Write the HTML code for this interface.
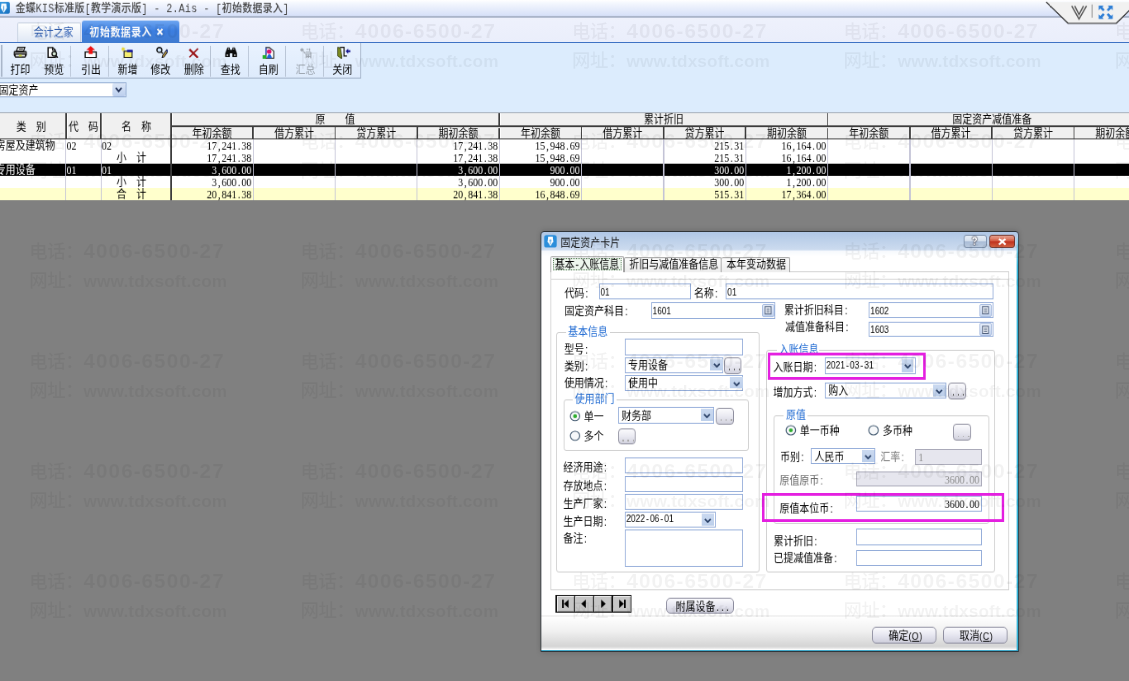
<!DOCTYPE html>
<html lang="zh-CN">
<head>
<meta charset="utf-8">
<title>金蝶KIS标准版[教学演示版]</title>
<style>
html,body{margin:0;padding:0;}
body{width:1129px;height:681px;overflow:hidden;background:#808080;}
#root{position:absolute;left:0;top:0;width:1366px;height:728px;overflow:hidden;background:#808080;transform-origin:0 0;transform:scale(0.826501,0.935440);font-family:"Liberation Sans","Noto Sans CJK SC",sans-serif;font-size:12px;color:#000;will-change:transform;}
#root div,#root svg{position:absolute;}
.t{white-space:nowrap;line-height:14px;font-size:12px;}
.n{font-family:"Liberation Serif","Noto Sans CJK SC",serif;font-size:12px;}
#root i{font-style:normal;display:inline-block;width:6px;text-align:center;}
.d{font-family:"Liberation Sans","Noto Sans CJK SC",sans-serif;font-size:10px;}
.d2{font-family:"Liberation Sans","Noto Sans CJK SC",sans-serif;font-size:10px;letter-spacing:0.12px;}
.wm{position:absolute;font-weight:bold;font-size:18.4px;line-height:30px;height:30px;white-space:nowrap;color:rgba(0,0,0,0.05);}
.wc{display:inline-block;width:54.4px;letter-spacing:-0.4px;font-weight:500;}
.wl{font-size:20.6px;letter-spacing:1.07px;}
.wu{font-size:17.2px;letter-spacing:0.13px;}
#wmroot{position:absolute;left:0;top:0;width:1129px;height:681px;overflow:hidden;font-family:"Liberation Sans","Noto Sans CJK SC",sans-serif;}
</style>
</head>
<body>
<div id="root">
<div style="position:absolute;left:0.0px;top:0.0px;width:1366.0px;height:120.8px;background:#dcecfd;"></div>
<div style="position:absolute;left:0.0px;top:0.0px;width:1366.0px;height:17.42px;background:linear-gradient(#ffffff 0%,#f4f7fe 20%,#d6e0f8 100%);"></div>
<div style="position:absolute;left:0.0px;top:16.89px;width:1366.0px;height:1.71px;background:#aab5ca;"></div>
<div style="position:absolute;left:0.0px;top:18.6px;width:1366.0px;height:26.3px;background:linear-gradient(#eef1fc,#eaeefb);"></div>
<div style="position:absolute;left:0.0px;top:44.58px;width:1366.0px;height:1.6px;background:#3269c0;"></div>
<div style="position:absolute;left:0.0px;top:46.18px;width:436.78px;height:37.63px;background:linear-gradient(#e9f2fe,#deebfc);border-right:1px solid #9fafc5;border-bottom:1px solid #9fafc5;box-sizing:border-box;"></div>
<div style="position:absolute;left:1.45px;top:48.11px;width:1.45px;height:34.21px;background:#a9b6c9;"></div>
<svg style="position:absolute;left:0px;top:2.03px" width="12.1" height="12.83" viewBox="0 0 10 12" preserveAspectRatio="none"><defs><linearGradient id="tig" x1="0" y1="0" x2="1" y2="1"><stop offset="0" stop-color="#3aa0e6"/><stop offset="1" stop-color="#166fbe"/></linearGradient></defs><rect x="-4" y="0" width="13.8" height="12" rx="1.6" fill="url(#tig)"/><path d="M1.4 1.6 L6.2 1.6 L6.8 6 L3.8 11 L0.8 6 Z" fill="#f4fbff"/><path d="M3.8 4 L3.8 9" stroke="#2f8fd9" stroke-width="0.8"/></svg>
<div class="t" style="left:18.63px;top:2.67px;color:#454545;font-weight:500;font-family:'Liberation Mono','Noto Sans CJK SC',monospace;letter-spacing:0.28px;">金蝶KIS标准版[教学演示版] - 2.Ais - [初始数据录入]</div>
<div style="position:absolute;left:20.93px;top:24.05px;width:77.07px;height:20.53px;background:linear-gradient(#fdfeff,#dfe8f5);border:1px solid #c3cede;border-bottom:none;box-sizing:border-box;border-radius:2px 2px 0 0;"></div>
<div class="t" style="left:40.65px;top:28.44px;color:#2c5cb0;">会计之家</div>
<div style="position:absolute;left:98.61px;top:22.45px;width:118.57px;height:23.52px;background:linear-gradient(#6ea6f0,#3c7ee0 45%,#3f7bd0);border-radius:3px 3px 0 0;"></div>
<div class="t" style="left:108.29px;top:27.79px;color:#fff;font-weight:bold;letter-spacing:0.6px;">初始数据录入</div>
<svg style="position:absolute;left:189.35px;top:30.47px" width="9.07" height="8.02" viewBox="0 0 8 8"><path d="M1 1 L7 7 M7 1 L1 7" stroke="#fff" stroke-width="2"/></svg>
<svg style="position:absolute;left:1258.32px;top:0px" width="108.89" height="27.79" viewBox="0 0 90 26" preserveAspectRatio="none"><path d="M6.5 2 L28.3 23.4 L76.6 23.4 L90 10 L90 2 Z" fill="#f1f1f1"/><path d="M6.5 2 L28.3 23.4 L76.6 23.4 L90 10" fill="none" stroke="#222" stroke-width="1.1"/><path d="M32 6 L39.3 19 L46.8 6 M35 6 L39.3 14.5 L43.8 6" fill="none" stroke="#555" stroke-width="1.3"/><path d="M52.3 4.5 L52.3 17.7" stroke="#777" stroke-width="0.8"/><g fill="#2f7fd6"><path d="M59 5.5 L64 5.5 L62.6 7 L65 9.8 L63.3 11.3 L60.6 8.6 L59 10.2 Z"/><path d="M73 5.5 L68 5.5 L69.4 7 L67 9.8 L68.7 11.3 L71.4 8.6 L73 10.2 Z"/><path d="M59 19 L64 19 L62.6 17.5 L65 14.7 L63.3 13.2 L60.6 15.9 L59 14.3 Z"/><path d="M73 19 L68 19 L69.4 17.5 L67 14.7 L68.7 13.2 L71.4 15.9 L73 14.3 Z"/></g></svg>
<div style="position:absolute;left:84.57px;top:48.64px;width:1.33px;height:33.14px;background:#b7c3d4;"></div>
<div style="position:absolute;left:130.79px;top:48.64px;width:1.33px;height:33.14px;background:#b7c3d4;"></div>
<div style="position:absolute;left:254.08px;top:48.64px;width:1.33px;height:33.14px;background:#b7c3d4;"></div>
<div style="position:absolute;left:300.06px;top:48.64px;width:1.33px;height:33.14px;background:#b7c3d4;"></div>
<div style="position:absolute;left:344.95px;top:48.64px;width:1.33px;height:33.14px;background:#b7c3d4;"></div>
<div style="position:absolute;left:390.93px;top:48.64px;width:1.33px;height:33.14px;background:#b7c3d4;"></div>
<div class="t" style="left:12.58px;top:67.88px;color:#000;">打印</div>
<div class="t" style="left:53.24px;top:67.88px;color:#000;">预览</div>
<div class="t" style="left:98.0px;top:67.88px;color:#000;">引出</div>
<div class="t" style="left:142.53px;top:67.88px;color:#000;">新增</div>
<div class="t" style="left:182.21px;top:67.88px;color:#000;">修改</div>
<div class="t" style="left:222.87px;top:67.88px;color:#000;">删除</div>
<div class="t" style="left:266.79px;top:67.88px;color:#000;">查找</div>
<div class="t" style="left:312.64px;top:67.88px;color:#000;">自刷</div>
<div class="t" style="left:357.41px;top:67.88px;color:#9aa3ad;">汇总</div>
<div class="t" style="left:402.18px;top:67.88px;color:#000;">关闭</div>
<svg style="position:absolute;left:16.33px;top:49.71px" width="16.94" height="12.51" viewBox="0 0 14 11.7" preserveAspectRatio="none"><path d="M4.6 0.6 L11.6 0.6 L10.4 4.2 L3.2 4.2 Z" fill="#fff" stroke="#111" stroke-width="1.1"/><path d="M5.6 2.3 L9.8 2.3" stroke="#111" stroke-width="0.9"/><path d="M1.6 4.2 L12.4 4.2 Q13.6 4.2 13.6 5.6 L13.6 8.4 L12 10.9 L2 10.9 L0.5 8.4 L0.5 5.6 Q0.5 4.2 1.6 4.2 Z" fill="#151515"/><path d="M1.4 6.3 L12.6 6.3" stroke="#c9c9c9" stroke-width="0.9"/><rect x="2.4" y="8" width="9.2" height="1.7" fill="#e9e9e9"/><rect x="5.6" y="8" width="3" height="1.7" fill="#c5d235"/></svg>
<svg style="position:absolute;left:56.87px;top:49.82px" width="13.79" height="12.4" viewBox="0 0 11.4 11.6" preserveAspectRatio="none"><path d="M1 0.8 L5.6 0.8 L8.2 3.4 L8.2 10.6 L1 10.6 Z" fill="#fff" stroke="#111" stroke-width="1.3"/><path d="M5.4 0.8 L5.4 3.6 L8.2 3.6" fill="none" stroke="#111" stroke-width="0.9"/><circle cx="7.2" cy="7" r="2.3" fill="#d9ecd9" stroke="#111" stroke-width="1.2"/><path d="M8.9 8.9 L10.6 11" stroke="#111" stroke-width="1.5"/></svg>
<svg style="position:absolute;left:102.36px;top:48.53px" width="15.49" height="13.47" viewBox="0 0 12.8 12.6" preserveAspectRatio="none"><path d="M0.9 6.2 L0.9 11.9 L11.9 11.9 L11.9 6.2 Z" fill="#fff" stroke="#111" stroke-width="1.2"/><path d="M6.4 0.2 L10.9 4.3 L8.3 4.3 L8.3 8.3 L4.5 8.3 L4.5 4.3 L1.9 4.3 Z" fill="#ee1111"/></svg>
<svg style="position:absolute;left:147.37px;top:49.82px" width="13.79" height="12.19" viewBox="0 0 11.4 11.4" preserveAspectRatio="none"><path d="M1.6 0.4 L1.6 5 M0 2.2 L3.6 2.2 M0.4 0.8 L3 3.8 M3 0.8 L0.4 3.8" stroke="#e4d21c" stroke-width="0.8"/><rect x="2.6" y="4.4" width="8" height="6.4" fill="#f5ee70" stroke="#222" stroke-width="1"/><rect x="5.6" y="3" width="5.6" height="2.4" fill="#10129c"/></svg>
<svg style="position:absolute;left:188.51px;top:50.03px" width="14.76" height="11.97" viewBox="0 0 12.2 11.2" preserveAspectRatio="none"><circle cx="3.2" cy="3.2" r="2.5" fill="#cfe3f7" stroke="#111" stroke-width="1.2"/><path d="M5 5 L6.6 6.8" stroke="#111" stroke-width="1.3"/><path d="M10.6 3 L11.9 4.3 L7.8 10.2 L5.9 10.9 L6.4 8.9 Z" fill="#e0b63a" stroke="#1a1a2a" stroke-width="0.9"/><path d="M10.6 3 L11.9 4.3 L11 5.6 L9.7 4.3 Z" fill="#223a9a"/></svg>
<svg style="position:absolute;left:227.95px;top:50.67px" width="13.07" height="11.33" viewBox="0 0 10.8 10.6" preserveAspectRatio="none"><path d="M1 1.6 L9.4 10" stroke="#9a1518" stroke-width="2.1" fill="none"/><path d="M9.6 0.8 L1 9.6" stroke="#9a1518" stroke-width="1.4" fill="none"/></svg>
<svg style="position:absolute;left:271.99px;top:50.03px" width="15.24" height="11.55" viewBox="0 0 12.6 10.8" preserveAspectRatio="none"><path d="M2.6 0.6 L4.8 0.6 L5.2 3 L7.4 3 L7.8 0.6 L10 0.6 L12.2 6.6 L12.2 10.2 L7.6 10.2 L7.6 6.6 L5 6.6 L5 10.2 L0.4 10.2 L0.4 6.6 Z" fill="#0c0c0c"/><rect x="1.8" y="7.8" width="1.6" height="1.3" fill="#e6e6e6"/><rect x="9.2" y="7.8" width="1.6" height="1.3" fill="#e6e6e6"/><rect x="3.2" y="1.6" width="1" height="1" fill="#ddd"/><rect x="8.4" y="1.6" width="1" height="1" fill="#ddd"/></svg>
<svg style="position:absolute;left:316.52px;top:49.82px" width="15.24" height="13.47" viewBox="0 0 12.6 12.6" preserveAspectRatio="none"><path d="M4 0.8 L7.4 0.8 L11.8 4.4 L11.8 11.4 L4 11.4 Z" fill="#fff" stroke="#222" stroke-width="1"/><path d="M4 1 L4 8" stroke="#3b57c8" stroke-width="1.2"/><circle cx="7.2" cy="4.8" r="2.3" fill="#d8146e"/><path d="M5 11.4 Q5.2 7.6 7.4 7.4 Q9.6 7.6 9.8 11.4 Z" fill="#1e63d8"/><rect x="0.6" y="8.4" width="3.6" height="3.6" fill="#22b02a"/></svg>
<svg style="position:absolute;left:363.46px;top:51.1px" width="15" height="12.19" viewBox="0 0 12.4 11.4" preserveAspectRatio="none"><circle cx="2" cy="2.2" r="1.7" fill="#a2a9b2"/><path d="M3.2 3.6 L5.2 5.4" stroke="#a2a9b2" stroke-width="1"/><path d="M6.4 1.6 L8.6 1.6 M9.6 0.6 L9.6 3.2 M5.6 4.4 L10.6 4.4 M5.2 6.6 L10.8 6.6 M5.6 8.8 L10.8 8.8 M10.8 4.4 L10.8 10.6 M6.2 6.6 L6.2 10.4 M8.4 6.6 L8.4 10.4" stroke="#a2a9b2" stroke-width="1.05"/></svg>
<svg style="position:absolute;left:407.5px;top:49.82px" width="16.7" height="13.04" viewBox="0 0 13.8 12.2" preserveAspectRatio="none"><path d="M2.8 0.6 L6.8 0.6 L6.8 9.2 L9.8 9.2" fill="#fff" stroke="#111" stroke-width="1.1"/><path d="M0.5 0.5 L3.2 1.2 L4.6 9.4 L4.4 12 L0.5 9.2 Z" fill="#7d8c22" stroke="#2a3008" stroke-width="0.7"/><path d="M8.4 4.4 L11 1.8 L11 3.4 L13.4 3.4 L13.4 5.4 L11 5.4 L11 7 Z" fill="#15158f"/></svg>
<div style="position:absolute;left:-1.21px;top:88.3px;width:154.14px;height:15.82px;background:#fff;border:1px solid #8fa9d0;box-sizing:border-box;"></div>
<div style="position:absolute;left:136.0px;top:89.37px;width:15.73px;height:13.68px;background:linear-gradient(#dbe6f7,#bccfee);border-radius:2px;"></div>
<svg style="position:absolute;left:139.38px;top:93.43px" width="9.2" height="5.99" viewBox="0 0 9 6"><path d="M1 1 L4.5 4.6 L8 1" fill="none" stroke="#1f2f55" stroke-width="1.8"/></svg>
<div class="t" style="left:-1.45px;top:89.58px;">固定资产</div>
<div style="position:absolute;left:0.0px;top:120.8px;width:1366.0px;height:93.22px;background:#fff;"></div>
<div style="position:absolute;left:0.0px;top:175.1px;width:1366.0px;height:12.94px;background:#000;"></div>
<div style="position:absolute;left:0.0px;top:201.19px;width:1366.0px;height:12.83px;background:#ffffcc;"></div>
<div style="position:absolute;left:79.25px;top:148.59px;width:1.21px;height:65.42px;background:#c3c3d6;"></div>
<div style="position:absolute;left:121.6px;top:148.59px;width:1.21px;height:65.42px;background:#c3c3d6;"></div>
<div style="position:absolute;left:206.05px;top:148.59px;width:1.69px;height:65.42px;background:#3c3c3c;"></div>
<div style="position:absolute;left:305.63px;top:148.59px;width:1.21px;height:65.42px;background:#c3c3d6;"></div>
<div style="position:absolute;left:404.96px;top:148.59px;width:1.21px;height:65.42px;background:#c3c3d6;"></div>
<div style="position:absolute;left:504.29px;top:148.59px;width:1.21px;height:65.42px;background:#c3c3d6;"></div>
<div style="position:absolute;left:603.63px;top:148.59px;width:1.21px;height:65.42px;background:#c3c3d6;"></div>
<div style="position:absolute;left:702.96px;top:148.59px;width:1.21px;height:65.42px;background:#c3c3d6;"></div>
<div style="position:absolute;left:802.3px;top:148.59px;width:1.21px;height:65.42px;background:#c3c3d6;"></div>
<div style="position:absolute;left:901.63px;top:148.59px;width:1.21px;height:65.42px;background:#c3c3d6;"></div>
<div style="position:absolute;left:1000.97px;top:148.59px;width:1.21px;height:65.42px;background:#c3c3d6;"></div>
<div style="position:absolute;left:1100.3px;top:148.59px;width:1.21px;height:65.42px;background:#c3c3d6;"></div>
<div style="position:absolute;left:1199.64px;top:148.59px;width:1.21px;height:65.42px;background:#c3c3d6;"></div>
<div style="position:absolute;left:1298.97px;top:148.59px;width:1.21px;height:65.42px;background:#c3c3d6;"></div>
<div style="position:absolute;left:0.0px;top:120.16px;width:1366.0px;height:29.18px;background:#f0f0f0;border-top:1px solid #a4acb6;border-bottom:1.3px solid #3c3c3c;box-sizing:border-box;"></div>
<div style="position:absolute;left:79.01px;top:120.8px;width:1.69px;height:28.33px;background:#3c3c3c;"></div>
<div style="position:absolute;left:80.58px;top:121.33px;width:1.09px;height:26.73px;background:#fff;"></div>
<div style="position:absolute;left:121.36px;top:120.8px;width:1.69px;height:28.33px;background:#3c3c3c;"></div>
<div style="position:absolute;left:122.93px;top:121.33px;width:1.09px;height:26.73px;background:#fff;"></div>
<div style="position:absolute;left:206.05px;top:120.8px;width:1.69px;height:28.33px;background:#3c3c3c;"></div>
<div style="position:absolute;left:207.62px;top:121.33px;width:1.09px;height:26.73px;background:#fff;"></div>
<div style="position:absolute;left:603.39px;top:120.8px;width:1.69px;height:28.33px;background:#3c3c3c;"></div>
<div style="position:absolute;left:604.96px;top:121.33px;width:1.09px;height:26.73px;background:#fff;"></div>
<div style="position:absolute;left:1000.73px;top:120.8px;width:1.69px;height:28.33px;background:#3c3c3c;"></div>
<div style="position:absolute;left:1002.3px;top:121.33px;width:1.09px;height:26.73px;background:#fff;"></div>
<div style="position:absolute;left:206.9px;top:134.16px;width:1159.1px;height:1.39px;background:#3c3c3c;"></div>
<div style="position:absolute;left:208.11px;top:135.55px;width:1157.89px;height:0.86px;background:#fff;"></div>
<div style="position:absolute;left:305.38px;top:135.23px;width:1.69px;height:13.9px;background:#3c3c3c;"></div>
<div style="position:absolute;left:307.08px;top:136.19px;width:1.09px;height:11.87px;background:#fff;"></div>
<div style="position:absolute;left:404.72px;top:135.23px;width:1.69px;height:13.9px;background:#3c3c3c;"></div>
<div style="position:absolute;left:406.41px;top:136.19px;width:1.09px;height:11.87px;background:#fff;"></div>
<div style="position:absolute;left:504.05px;top:135.23px;width:1.69px;height:13.9px;background:#3c3c3c;"></div>
<div style="position:absolute;left:505.75px;top:136.19px;width:1.09px;height:11.87px;background:#fff;"></div>
<div style="position:absolute;left:702.72px;top:135.23px;width:1.69px;height:13.9px;background:#3c3c3c;"></div>
<div style="position:absolute;left:704.42px;top:136.19px;width:1.09px;height:11.87px;background:#fff;"></div>
<div style="position:absolute;left:802.06px;top:135.23px;width:1.69px;height:13.9px;background:#3c3c3c;"></div>
<div style="position:absolute;left:803.75px;top:136.19px;width:1.09px;height:11.87px;background:#fff;"></div>
<div style="position:absolute;left:901.39px;top:135.23px;width:1.69px;height:13.9px;background:#3c3c3c;"></div>
<div style="position:absolute;left:903.08px;top:136.19px;width:1.09px;height:11.87px;background:#fff;"></div>
<div style="position:absolute;left:1100.06px;top:135.23px;width:1.69px;height:13.9px;background:#3c3c3c;"></div>
<div style="position:absolute;left:1101.75px;top:136.19px;width:1.09px;height:11.87px;background:#fff;"></div>
<div style="position:absolute;left:1199.39px;top:135.23px;width:1.69px;height:13.9px;background:#3c3c3c;"></div>
<div style="position:absolute;left:1201.09px;top:136.19px;width:1.09px;height:11.87px;background:#fff;"></div>
<div style="position:absolute;left:1298.73px;top:135.23px;width:1.69px;height:13.9px;background:#3c3c3c;"></div>
<div style="position:absolute;left:1300.42px;top:136.19px;width:1.09px;height:11.87px;background:#fff;"></div>
<div class="t" style="left:-62.25px;width:200px;text-align:center;top:128.71px;">类&#12288;别</div>
<div class="t" style="left:0.9099999999999966px;width:200px;text-align:center;top:128.71px;">代&#12288;码</div>
<div class="t" style="left:65.03px;width:200px;text-align:center;top:128.71px;">名&#12288;称</div>
<div class="t" style="left:305.57px;width:200px;text-align:center;top:121.33px;">原&#12288;&#12288;值</div>
<div class="t" style="left:702.9px;width:200px;text-align:center;top:121.33px;">累计折旧</div>
<div class="t" style="left:1100.24px;width:200px;text-align:center;top:121.33px;">固定资产减值准备</div>
<div class="t" style="left:156.56px;width:200px;text-align:center;top:135.77px;">年初余额</div>
<div class="t" style="left:255.89999999999998px;width:200px;text-align:center;top:135.77px;">借方累计</div>
<div class="t" style="left:355.23px;width:200px;text-align:center;top:135.77px;">贷方累计</div>
<div class="t" style="left:454.57000000000005px;width:200px;text-align:center;top:135.77px;">期初余额</div>
<div class="t" style="left:553.9px;width:200px;text-align:center;top:135.77px;">年初余额</div>
<div class="t" style="left:653.24px;width:200px;text-align:center;top:135.77px;">借方累计</div>
<div class="t" style="left:752.57px;width:200px;text-align:center;top:135.77px;">贷方累计</div>
<div class="t" style="left:851.9px;width:200px;text-align:center;top:135.77px;">期初余额</div>
<div class="t" style="left:951.24px;width:200px;text-align:center;top:135.77px;">年初余额</div>
<div class="t" style="left:1050.57px;width:200px;text-align:center;top:135.77px;">借方累计</div>
<div class="t" style="left:1149.91px;width:200px;text-align:center;top:135.77px;">贷方累计</div>
<div class="t" style="left:1249.24px;width:200px;text-align:center;top:135.77px;">期初余额</div>
<div class="t" style="left:-5.2px;top:148.7px;color:#000;">房屋及建筑物</div>
<div class="t n" style="left:80.58px;top:148.7px;color:#000;">02</div>
<div class="t n" style="left:122.93px;top:148.7px;color:#000;">02</div>
<div class="t n" style="left:184.17000000000002px;width:120px;text-align:right;top:148.7px;color:#000;">17<i>,</i>241<i>.</i>38</div>
<div class="t n" style="left:482.17999999999995px;width:120px;text-align:right;top:148.7px;color:#000;">17<i>,</i>241<i>.</i>38</div>
<div class="t n" style="left:581.51px;width:120px;text-align:right;top:148.7px;color:#000;">15<i>,</i>948<i>.</i>69</div>
<div class="t n" style="left:780.18px;width:120px;text-align:right;top:148.7px;color:#000;">215<i>.</i>31</div>
<div class="t n" style="left:879.52px;width:120px;text-align:right;top:148.7px;color:#000;">16<i>,</i>164<i>.</i>00</div>
<div class="t" style="left:141.08px;top:161.85px;color:#000;">小&#12288;计</div>
<div class="t n" style="left:184.17000000000002px;width:120px;text-align:right;top:161.85px;color:#000;">17<i>,</i>241<i>.</i>38</div>
<div class="t n" style="left:482.17999999999995px;width:120px;text-align:right;top:161.85px;color:#000;">17<i>,</i>241<i>.</i>38</div>
<div class="t n" style="left:581.51px;width:120px;text-align:right;top:161.85px;color:#000;">15<i>,</i>948<i>.</i>69</div>
<div class="t n" style="left:780.18px;width:120px;text-align:right;top:161.85px;color:#000;">215<i>.</i>31</div>
<div class="t n" style="left:879.52px;width:120px;text-align:right;top:161.85px;color:#000;">16<i>,</i>164<i>.</i>00</div>
<div class="t" style="left:-5.2px;top:175.0px;color:#fff;">专用设备</div>
<div class="t n" style="left:80.58px;top:175.0px;color:#fff;">01</div>
<div class="t n" style="left:122.93px;top:175.0px;color:#fff;">01</div>
<div class="t n" style="left:184.17000000000002px;width:120px;text-align:right;top:175.0px;color:#fff;">3<i>,</i>600<i>.</i>00</div>
<div class="t n" style="left:482.17999999999995px;width:120px;text-align:right;top:175.0px;color:#fff;">3<i>,</i>600<i>.</i>00</div>
<div class="t n" style="left:581.51px;width:120px;text-align:right;top:175.0px;color:#fff;">900<i>.</i>00</div>
<div class="t n" style="left:780.18px;width:120px;text-align:right;top:175.0px;color:#fff;">300<i>.</i>00</div>
<div class="t n" style="left:879.52px;width:120px;text-align:right;top:175.0px;color:#fff;">1<i>,</i>200<i>.</i>00</div>
<div class="t" style="left:141.08px;top:188.15px;color:#000;">小&#12288;计</div>
<div class="t n" style="left:184.17000000000002px;width:120px;text-align:right;top:188.15px;color:#000;">3<i>,</i>600<i>.</i>00</div>
<div class="t n" style="left:482.17999999999995px;width:120px;text-align:right;top:188.15px;color:#000;">3<i>,</i>600<i>.</i>00</div>
<div class="t n" style="left:581.51px;width:120px;text-align:right;top:188.15px;color:#000;">900<i>.</i>00</div>
<div class="t n" style="left:780.18px;width:120px;text-align:right;top:188.15px;color:#000;">300<i>.</i>00</div>
<div class="t n" style="left:879.52px;width:120px;text-align:right;top:188.15px;color:#000;">1<i>,</i>200<i>.</i>00</div>
<div class="t" style="left:141.08px;top:201.19px;color:#000;">合&#12288;计</div>
<div class="t n" style="left:184.17000000000002px;width:120px;text-align:right;top:201.19px;color:#000;">20<i>,</i>841<i>.</i>38</div>
<div class="t n" style="left:482.17999999999995px;width:120px;text-align:right;top:201.19px;color:#000;">20<i>,</i>841<i>.</i>38</div>
<div class="t n" style="left:581.51px;width:120px;text-align:right;top:201.19px;color:#000;">16<i>,</i>848<i>.</i>69</div>
<div class="t n" style="left:780.18px;width:120px;text-align:right;top:201.19px;color:#000;">515<i>.</i>31</div>
<div class="t n" style="left:879.52px;width:120px;text-align:right;top:201.19px;color:#000;">17<i>,</i>364<i>.</i>00</div>
<div style="position:absolute;left:653.96px;top:247.37px;width:579.43px;height:449.41px;background:linear-gradient(#b0c7e6 0px,#bfd2ea 10px,#ccdbef 19px,#f6f9fd 20.5px,#ffffff 26px,#ffffff 100%);border:1px solid #2e3338;box-sizing:border-box;border-radius:4px 4px 0 0;box-shadow:0 0 6px rgba(0,0,0,0.2);"></div>
<div style="position:absolute;left:1230.37px;top:254.43px;width:1.45px;height:441.08px;background:linear-gradient(#9fd4ea,#33b4d8 30px,#33b4d8);"></div>
<div style="position:absolute;left:655.17px;top:694.65px;width:576.77px;height:1.07px;background:#2a9fc4;"></div>
<div style="position:absolute;left:655.29px;top:659.16px;width:574.71px;height:34.64px;background:linear-gradient(#ffffff,#f0f0f0 45%,#d4d4d4 92%,#f4f4f4);"></div>
<div style="position:absolute;left:655.29px;top:658.09px;width:574.71px;height:1.07px;background:#e4e4e4;"></div>
<svg style="position:absolute;left:658.2px;top:251.22px" width="15.97" height="13.9" viewBox="0 0 14 14" preserveAspectRatio="none"><rect x="0.3" y="0.3" width="13.4" height="13.4" rx="2.6" fill="#2b8edb"/><path d="M4.6 2 L9.4 2 L10 7.2 L7 12.4 L4 7.2 Z" fill="#fff"/><path d="M7 5 L7 10.4 M5.8 6.2 L8.2 6.2" stroke="#2b8edb" stroke-width="0.8"/></svg>
<div class="t" style="left:678.28px;top:252.61px;color:#111;">固定资产卡片</div>
<div style="position:absolute;left:1165.64px;top:251.22px;width:28.8px;height:14.11px;background:linear-gradient(#e6edf6,#d3deec 48%,#a9bcd6 52%,#b9c9de);border:1px solid #7b8ea9;border-radius:3px;box-sizing:border-box;"></div>
<div class="t" style="left:1175.56px;top:250.79px;color:#fff;font-weight:bold;font-size:12px;text-shadow:0 0 1px #223,0 0 1px #223,0 0 2px #223;">?</div>
<div style="position:absolute;left:1197.34px;top:251.22px;width:30.25px;height:14.11px;background:linear-gradient(#e6a392,#d4583f 48%,#bf311d 52%,#d2603f);border:1px solid #70352c;border-radius:3px;box-sizing:border-box;"></div>
<svg style="position:absolute;left:1206.77px;top:254px" width="11.37" height="8.55" viewBox="0 0 10 8" preserveAspectRatio="none"><path d="M1.5 1 L8.5 7 M8.5 1 L1.5 7" stroke="#fff" stroke-width="2.1"/></svg>
<div style="position:absolute;left:665.82px;top:290.34px;width:555.23px;height:340.8px;background:#fff;border:1px solid #d0d0d0;box-sizing:border-box;"></div>
<div style="position:absolute;left:665.82px;top:298.04px;width:555.23px;height:1.07px;background:#d6d6d6;"></div>
<div style="position:absolute;left:754.51px;top:275.38px;width:118.33px;height:15.39px;background:linear-gradient(#fbfbfb,#ececec);border:1px solid #9a9a9a;border-bottom:none;box-sizing:border-box;border-radius:2px 2px 0 0;"></div>
<div style="position:absolute;left:872.84px;top:275.38px;width:82.76px;height:15.39px;background:linear-gradient(#fbfbfb,#ececec);border:1px solid #9a9a9a;border-left:none;border-bottom:none;box-sizing:border-box;border-radius:2px 2px 0 0;"></div>
<div style="position:absolute;left:665.82px;top:273.88px;width:89.41px;height:17.53px;background:#fff;border:1px solid #9a9a9a;border-bottom:none;box-sizing:border-box;border-radius:2px 2px 0 0;"></div>
<div style="position:absolute;left:669.09px;top:276.02px;width:83.0px;height:13.04px;border:1px dotted #3d6b3d;box-sizing:border-box;background:#eef6ee;"></div>
<div class="t" style="left:671.26px;top:275.81px;">基本<i>-</i>入账信息</div>
<div class="t" style="left:761.28px;top:276.02px;">折旧与减值准备信息</div>
<div class="t" style="left:878.89px;top:276.02px;">本年变动数据</div>
<div class="t" style="left:682.88px;top:307.02px;">代码<i>:</i></div>
<div style="position:absolute;left:724.74px;top:303.17px;width:110.83px;height:17.1px;background:#fff;border:1px solid #93acd9;box-sizing:border-box;"></div>
<div class="t d" style="left:726.44px;top:306.38px;">01</div>
<div class="t" style="left:839.68px;top:307.02px;">名称<i>:</i></div>
<div style="position:absolute;left:878.4px;top:303.17px;width:323.53px;height:17.1px;background:#fff;border:1px solid #93acd9;box-sizing:border-box;"></div>
<div class="t d" style="left:880.1px;top:305.52px;">01</div>
<div class="t" style="left:682.88px;top:325.84px;">固定资产科目<i>:</i></div>
<div style="position:absolute;left:787.9px;top:323.48px;width:150.51px;height:17.1px;background:#fff;border:1px solid #93acd9;box-sizing:border-box;"></div>
<div class="t d" style="left:789.59px;top:326.05px;">1601</div>
<div style="position:absolute;left:921.72px;top:324.98px;width:15.0px;height:14.11px;background:linear-gradient(#e6edf9,#c3d3ee);border:1px solid #a9bde0;border-radius:2px;box-sizing:border-box;"></div>
<svg style="position:absolute;left:924.86px;top:327.33px" width="8.71" height="9.41" viewBox="0 0 8 9" preserveAspectRatio="none"><rect x="0.7" y="0.7" width="6.6" height="7.6" fill="#f4f7fc" stroke="#50607c" stroke-width="1"/><path d="M2.3 3 L5.7 3 M2.3 4.7 L5.7 4.7 M2.3 6.4 L5.7 6.4" stroke="#50607c" stroke-width="0.8"/></svg>
<div class="t" style="left:948.82px;top:324.55px;">累计折旧科目<i>:</i></div>
<div style="position:absolute;left:1051.42px;top:323.48px;width:150.51px;height:16.89px;background:#fff;border:1px solid #93acd9;box-sizing:border-box;"></div>
<div class="t d" style="left:1053.11px;top:326.05px;">1602</div>
<div style="position:absolute;left:1185.0px;top:324.98px;width:15.0px;height:13.9px;background:linear-gradient(#e6edf9,#c3d3ee);border:1px solid #a9bde0;border-radius:2px;box-sizing:border-box;"></div>
<svg style="position:absolute;left:1188.14px;top:327.33px" width="8.71" height="9.19" viewBox="0 0 8 9" preserveAspectRatio="none"><rect x="0.7" y="0.7" width="6.6" height="7.6" fill="#f4f7fc" stroke="#50607c" stroke-width="1"/><path d="M2.3 3 L5.7 3 M2.3 4.7 L5.7 4.7 M2.3 6.4 L5.7 6.4" stroke="#50607c" stroke-width="0.8"/></svg>
<div class="t" style="left:950.03px;top:343.37px;">减值准备科目<i>:</i></div>
<div style="position:absolute;left:1051.42px;top:343.8px;width:150.51px;height:16.68px;background:#fff;border:1px solid #93acd9;box-sizing:border-box;"></div>
<div class="t d" style="left:1053.11px;top:346.15px;">1603</div>
<div style="position:absolute;left:1185.0px;top:345.29px;width:15.0px;height:13.9px;background:linear-gradient(#e6edf9,#c3d3ee);border:1px solid #a9bde0;border-radius:2px;box-sizing:border-box;"></div>
<svg style="position:absolute;left:1188.14px;top:347.64px" width="8.71" height="9.19" viewBox="0 0 8 9" preserveAspectRatio="none"><rect x="0.7" y="0.7" width="6.6" height="7.6" fill="#f4f7fc" stroke="#50607c" stroke-width="1"/><path d="M2.3 3 L5.7 3 M2.3 4.7 L5.7 4.7 M2.3 6.4 L5.7 6.4" stroke="#50607c" stroke-width="0.8"/></svg>
<div style="position:absolute;left:673.44px;top:354.91px;width:245.86px;height:256.78px;border:1px solid #cdcdcd;border-radius:3px;box-sizing:border-box;"></div>
<div style="position:absolute;left:684.69px;top:353.84px;width:53.24px;height:3.21px;background:#fff;"></div>
<div class="t" style="left:687.36px;top:347.86px;color:#1c68d2;">基本信息</div>
<div class="t" style="left:682.64px;top:367.31px;">型号<i>:</i></div>
<div style="position:absolute;left:755.96px;top:362.4px;width:142.77px;height:17.32px;background:#fff;border:1px solid #93acd9;box-sizing:border-box;"></div>
<div class="t" style="left:682.64px;top:384.85px;">类别<i>:</i></div>
<div style="position:absolute;left:755.96px;top:381.64px;width:119.3px;height:16.89px;background:#fff;border:1px solid #93acd9;box-sizing:border-box;"></div>
<div style="position:absolute;left:859.29px;top:383.78px;width:15.24px;height:12.61px;background:linear-gradient(#cad9f0,#bccfeb);"></div>
<svg style="position:absolute;left:862.55px;top:388.48px" width="8.71" height="5.13" viewBox="0 0 8 5" preserveAspectRatio="none"><path d="M0.8 0.8 L4 4 L7.2 0.8" fill="none" stroke="#2a4066" stroke-width="1.7"/></svg>
<div class="t" style="left:760.07px;top:384.42px;">专用设备</div>
<div style="position:absolute;left:876.22px;top:381.85px;width:21.05px;height:17.75px;background:linear-gradient(#fbfbfd,#e9e9f1 50%,#d2d2de);border:1px solid #8e8e9e;border-radius:4px;box-sizing:border-box;"></div>
<div style="position:absolute;left:881.67px;top:394.36px;width:1.45px;height:1.28px;background:#555;"></div>
<div style="position:absolute;left:887.72px;top:394.36px;width:1.45px;height:1.28px;background:#555;"></div>
<div style="position:absolute;left:893.77px;top:394.36px;width:1.45px;height:1.28px;background:#555;"></div>
<div class="t" style="left:682.64px;top:403.45px;">使用情况<i>:</i></div>
<div style="position:absolute;left:755.96px;top:400.88px;width:143.5px;height:16.68px;background:#fff;border:1px solid #93acd9;box-sizing:border-box;"></div>
<div style="position:absolute;left:883.48px;top:403.02px;width:15.24px;height:12.4px;background:linear-gradient(#cad9f0,#bccfeb);"></div>
<svg style="position:absolute;left:886.75px;top:407.62px" width="8.71" height="5.13" viewBox="0 0 8 5" preserveAspectRatio="none"><path d="M0.8 0.8 L4 4 L7.2 0.8" fill="none" stroke="#2a4066" stroke-width="1.7"/></svg>
<div class="t" style="left:760.07px;top:403.45px;">使用中</div>
<div style="position:absolute;left:681.67px;top:427.18px;width:224.8px;height:54.73px;border:1px solid #cdcdcd;border-radius:3px;box-sizing:border-box;"></div>
<div style="position:absolute;left:692.92px;top:426.11px;width:53.24px;height:3.21px;background:#fff;"></div>
<div class="t" style="left:695.58px;top:420.12px;color:#1c68d2;">使用部门</div>
<svg style="position:absolute;left:688.69px;top:439.37px" width="13.55" height="11.76" viewBox="0 0 12 12" preserveAspectRatio="none"><circle cx="6" cy="6" r="5" fill="#f6f8fa" stroke="#4a6076" stroke-width="1.1"/><circle cx="6" cy="6" r="2.1" fill="#2fae2f"/></svg>
<div class="t" style="left:706.59px;top:438.94px;">单一</div>
<div style="position:absolute;left:747.73px;top:435.3px;width:115.91px;height:17.32px;background:#fff;border:1px solid #93acd9;box-sizing:border-box;"></div>
<div style="position:absolute;left:847.67px;top:437.44px;width:15.24px;height:13.04px;background:linear-gradient(#cad9f0,#bccfeb);"></div>
<svg style="position:absolute;left:850.94px;top:442.36px" width="8.71" height="5.13" viewBox="0 0 8 5" preserveAspectRatio="none"><path d="M0.8 0.8 L4 4 L7.2 0.8" fill="none" stroke="#2a4066" stroke-width="1.7"/></svg>
<div class="t" style="left:752.09px;top:438.08px;">财务部</div>
<div style="position:absolute;left:866.3px;top:435.73px;width:21.54px;height:17.96px;background:linear-gradient(#fbfbfd,#e9e9f1 50%,#d2d2de);border:1px solid #8e8e9e;border-radius:4px;box-sizing:border-box;"></div>
<div style="position:absolute;left:871.99px;top:448.45px;width:1.45px;height:1.28px;background:#aaa;"></div>
<div style="position:absolute;left:878.04px;top:448.45px;width:1.45px;height:1.28px;background:#aaa;"></div>
<div style="position:absolute;left:884.09px;top:448.45px;width:1.45px;height:1.28px;background:#aaa;"></div>
<svg style="position:absolute;left:688.69px;top:460.1px" width="13.55" height="11.76" viewBox="0 0 12 12" preserveAspectRatio="none"><circle cx="6" cy="6" r="5" fill="#f6f8fa" stroke="#4a6076" stroke-width="1.1"/></svg>
<div class="t" style="left:706.59px;top:459.89px;">多个</div>
<div style="position:absolute;left:747.73px;top:457.54px;width:21.54px;height:17.96px;background:linear-gradient(#fbfbfd,#e9e9f1 50%,#d2d2de);border:1px solid #8e8e9e;border-radius:4px;box-sizing:border-box;"></div>
<div style="position:absolute;left:753.42px;top:470.26px;width:1.45px;height:1.28px;background:#aaa;"></div>
<div style="position:absolute;left:759.47px;top:470.26px;width:1.45px;height:1.28px;background:#aaa;"></div>
<div style="position:absolute;left:765.52px;top:470.26px;width:1.45px;height:1.28px;background:#aaa;"></div>
<div class="t" style="left:681.43px;top:493.46px;">经济用途<i>:</i></div>
<div style="position:absolute;left:755.96px;top:489.18px;width:143.01px;height:17.1px;background:#fff;border:1px solid #93acd9;box-sizing:border-box;"></div>
<div class="t" style="left:681.43px;top:512.81px;">存放地点<i>:</i></div>
<div style="position:absolute;left:755.96px;top:508.53px;width:143.01px;height:17.1px;background:#fff;border:1px solid #93acd9;box-sizing:border-box;"></div>
<div class="t" style="left:681.43px;top:532.16px;">生产厂家<i>:</i></div>
<div style="position:absolute;left:755.96px;top:527.88px;width:143.01px;height:17.1px;background:#fff;border:1px solid #93acd9;box-sizing:border-box;"></div>
<div class="t" style="left:681.43px;top:551.18px;">生产日期<i>:</i></div>
<div style="position:absolute;left:755.96px;top:546.91px;width:110.34px;height:17.32px;background:#fff;border:1px solid #93acd9;box-sizing:border-box;"></div>
<div style="position:absolute;left:849.36px;top:549.05px;width:14.52px;height:13.04px;background:linear-gradient(#cad9f0,#bccfeb);"></div>
<svg style="position:absolute;left:852.27px;top:553.96px" width="8.71" height="5.13" viewBox="0 0 8 5" preserveAspectRatio="none"><path d="M0.8 0.8 L4 4 L7.2 0.8" fill="none" stroke="#2a4066" stroke-width="1.7"/></svg>
<div class="t d2" style="left:757.65px;top:547.76px;">2022<i>-</i>06<i>-</i>01</div>
<div class="t" style="left:681.43px;top:568.72px;">备注<i>:</i></div>
<div style="position:absolute;left:755.96px;top:565.72px;width:143.01px;height:40.41px;background:#fff;border:1px solid #93acd9;box-sizing:border-box;"></div>
<div style="position:absolute;left:927.04px;top:373.73px;width:276.83px;height:237.96px;border:1px solid #cdcdcd;border-radius:3px;box-sizing:border-box;"></div>
<div style="position:absolute;left:939.75px;top:372.66px;width:51.54px;height:3.21px;background:#fff;"></div>
<div class="t" style="left:942.41px;top:366.67px;color:#1c68d2;">入账信息</div>
<div class="t" style="left:935.51px;top:385.91px;">入账日期<i>:</i></div>
<div style="position:absolute;left:997.94px;top:382.07px;width:109.86px;height:17.64px;background:#fff;border:1px solid #93acd9;box-sizing:border-box;"></div>
<div style="position:absolute;left:1091.11px;top:384.2px;width:14.28px;height:13.36px;background:linear-gradient(#cad9f0,#bccfeb);"></div>
<svg style="position:absolute;left:1093.89px;top:389.28px" width="8.71" height="5.13" viewBox="0 0 8 5" preserveAspectRatio="none"><path d="M0.8 0.8 L4 4 L7.2 0.8" fill="none" stroke="#2a4066" stroke-width="1.7"/></svg>
<div class="t d2" style="left:999.64px;top:383.67px;">2021<i>-</i>03<i>-</i>31</div>
<div class="t" style="left:935.51px;top:412.85px;">增加方式<i>:</i></div>
<div style="position:absolute;left:997.94px;top:408.58px;width:146.88px;height:17.32px;background:#fff;border:1px solid #93acd9;box-sizing:border-box;"></div>
<div style="position:absolute;left:1128.86px;top:410.72px;width:15.24px;height:13.04px;background:linear-gradient(#cad9f0,#bccfeb);"></div>
<svg style="position:absolute;left:1132.12px;top:415.63px" width="8.71" height="5.13" viewBox="0 0 8 5" preserveAspectRatio="none"><path d="M0.8 0.8 L4 4 L7.2 0.8" fill="none" stroke="#2a4066" stroke-width="1.7"/></svg>
<div class="t" style="left:1002.3px;top:411.14px;">购入</div>
<div style="position:absolute;left:1147.0px;top:408.58px;width:21.54px;height:17.96px;background:linear-gradient(#fbfbfd,#e9e9f1 50%,#d2d2de);border:1px solid #8e8e9e;border-radius:4px;box-sizing:border-box;"></div>
<div style="position:absolute;left:1152.69px;top:421.3px;width:1.45px;height:1.28px;background:#555;"></div>
<div style="position:absolute;left:1158.74px;top:421.3px;width:1.45px;height:1.28px;background:#555;"></div>
<div style="position:absolute;left:1164.79px;top:421.3px;width:1.45px;height:1.28px;background:#555;"></div>
<div style="position:absolute;left:935.51px;top:443.64px;width:261.83px;height:116.74px;border:1px solid #cdcdcd;border-radius:3px;box-sizing:border-box;"></div>
<div style="position:absolute;left:948.21px;top:442.57px;width:28.31px;height:3.21px;background:#fff;"></div>
<div class="t" style="left:950.88px;top:436.59px;color:#1c68d2;">原值</div>
<svg style="position:absolute;left:950.03px;top:453.9px" width="13.79" height="11.97" viewBox="0 0 12 12" preserveAspectRatio="none"><circle cx="6" cy="6" r="5" fill="#f6f8fa" stroke="#4a6076" stroke-width="1.1"/><circle cx="6" cy="6" r="2.1" fill="#2fae2f"/></svg>
<div class="t" style="left:967.69px;top:453.69px;">单一币种</div>
<svg style="position:absolute;left:1050.45px;top:453.9px" width="13.79" height="11.97" viewBox="0 0 12 12" preserveAspectRatio="none"><circle cx="6" cy="6" r="5" fill="#f6f8fa" stroke="#4a6076" stroke-width="1.1"/></svg>
<div class="t" style="left:1068.12px;top:453.69px;">多币种</div>
<div style="position:absolute;left:1153.05px;top:452.84px;width:22.02px;height:18.17px;background:linear-gradient(#fbfbfd,#e9e9f1 50%,#d2d2de);border:1px solid #8e8e9e;border-radius:4px;box-sizing:border-box;"></div>
<div style="position:absolute;left:1158.98px;top:465.77px;width:1.45px;height:1.28px;background:#aaa;"></div>
<div style="position:absolute;left:1165.03px;top:465.77px;width:1.45px;height:1.28px;background:#aaa;"></div>
<div style="position:absolute;left:1171.08px;top:465.77px;width:1.45px;height:1.28px;background:#aaa;"></div>
<div class="t" style="left:943.98px;top:481.7px;">币别<i>:</i></div>
<div style="position:absolute;left:981.25px;top:478.92px;width:77.92px;height:16.89px;background:#fff;border:1px solid #93acd9;box-sizing:border-box;"></div>
<div style="position:absolute;left:1043.19px;top:481.06px;width:15.24px;height:12.61px;background:linear-gradient(#cad9f0,#bccfeb);"></div>
<svg style="position:absolute;left:1046.46px;top:485.76px" width="8.71" height="5.13" viewBox="0 0 8 5" preserveAspectRatio="none"><path d="M0.8 0.8 L4 4 L7.2 0.8" fill="none" stroke="#2a4066" stroke-width="1.7"/></svg>
<div class="t" style="left:985.6px;top:482.23px;">人民币</div>
<div class="t" style="left:1065.21px;top:481.7px;color:#777;">汇率<i>:</i></div>
<div style="position:absolute;left:1107.32px;top:479.77px;width:80.34px;height:17.1px;background:#e6e6ee;border:1px solid #a9a9b8;box-sizing:border-box;"></div>
<div class="t n" style="left:1111.19px;top:482.34px;color:#888;">1</div>
<div class="t" style="left:943.25px;top:506.71px;color:#666;">原值原币<i>:</i></div>
<div style="position:absolute;left:1036.42px;top:503.51px;width:151.24px;height:16.68px;background:#e6e6ee;border:1px solid #a9a9b8;box-sizing:border-box;"></div>
<div class="t n" style="left:1065.0px;width:120px;text-align:right;top:505.86px;color:#888;">3600<i>.</i>00</div>
<div class="t" style="left:943.25px;top:536.65px;">原值本位币<i>:</i></div>
<div style="position:absolute;left:1036.42px;top:529.8px;width:151.24px;height:16.89px;background:#fff;border:1px solid #93acd9;box-sizing:border-box;"></div>
<div class="t n" style="left:1065.0px;width:120px;text-align:right;top:531.73px;">3600<i>.</i>00</div>
<div class="t" style="left:935.99px;top:572.14px;">累计折旧<i>:</i></div>
<div style="position:absolute;left:1036.42px;top:565.3px;width:151.97px;height:17.53px;background:#fff;border:1px solid #93acd9;box-sizing:border-box;"></div>
<div class="t" style="left:935.99px;top:589.67px;">已提减值准备<i>:</i></div>
<div style="position:absolute;left:1036.42px;top:588.39px;width:151.97px;height:17.1px;background:#fff;border:1px solid #93acd9;box-sizing:border-box;"></div>
<div style="position:absolute;left:928.73px;top:377.36px;width:191.17px;height:28.22px;border:solid #e41fe0;border-width:3.0px 3.5px;box-sizing:border-box;"></div>
<div style="position:absolute;left:921.96px;top:526.81px;width:293.53px;height:30.79px;border:solid #e41fe0;border-width:3.0px 3.5px;box-sizing:border-box;"></div>
<div style="position:absolute;left:672.47px;top:636.06px;width:91.23px;height:18.81px;background:#111;"></div>
<div style="position:absolute;left:673.68px;top:637.13px;width:21.42px;height:16.68px;background:#c6c6c6;border-top:1px solid #eee;border-left:1px solid #eee;border-right:1px solid #888;border-bottom:1px solid #888;box-sizing:border-box;"></div>
<svg style="position:absolute;left:678.77px;top:639.91px" width="11.13" height="11.12" viewBox="0 0 10 10" preserveAspectRatio="none"><rect x="1" y="1" width="1.8" height="8" fill="#000"/><path d="M8 1 L8 9 L3 5 Z" fill="#000"/></svg>
<div style="position:absolute;left:696.31px;top:637.13px;width:21.42px;height:16.68px;background:#c6c6c6;border-top:1px solid #eee;border-left:1px solid #eee;border-right:1px solid #888;border-bottom:1px solid #888;box-sizing:border-box;"></div>
<svg style="position:absolute;left:701.39px;top:639.91px" width="11.13" height="11.12" viewBox="0 0 10 10" preserveAspectRatio="none"><path d="M7 1 L7 9 L2 5 Z" fill="#000"/></svg>
<div style="position:absolute;left:718.93px;top:637.13px;width:21.42px;height:16.68px;background:#c6c6c6;border-top:1px solid #eee;border-left:1px solid #eee;border-right:1px solid #888;border-bottom:1px solid #888;box-sizing:border-box;"></div>
<svg style="position:absolute;left:724.02px;top:639.91px" width="11.13" height="11.12" viewBox="0 0 10 10" preserveAspectRatio="none"><path d="M3 1 L3 9 L8 5 Z" fill="#000"/></svg>
<div style="position:absolute;left:741.56px;top:637.13px;width:21.42px;height:16.68px;background:#c6c6c6;border-top:1px solid #eee;border-left:1px solid #eee;border-right:1px solid #888;border-bottom:1px solid #888;box-sizing:border-box;"></div>
<svg style="position:absolute;left:746.64px;top:639.91px" width="11.13" height="11.12" viewBox="0 0 10 10" preserveAspectRatio="none"><path d="M2 1 L2 9 L7 5 Z" fill="#000"/><rect x="7.2" y="1" width="1.8" height="8" fill="#000"/></svg>
<div style="position:absolute;left:806.29px;top:638.63px;width:81.79px;height:17.75px;background:linear-gradient(#fafafd,#e6e6f0 50%,#cfcfdc);border:1px solid #8a8a9c;border-radius:5px;box-sizing:border-box;"></div>
<div class="t" style="left:817.42px;top:641.52px;">附属设备<i>.</i><i>.</i><i>.</i></div>
<div style="position:absolute;left:1055.29px;top:670.49px;width:77.43px;height:17.75px;background:linear-gradient(#fafafd,#e6e6f0 50%,#cfcfdc);border:1px solid #8a8a9c;border-radius:5px;box-sizing:border-box;"></div>
<div class="t" style="left:1075.14px;top:673.37px;">确定<span style="font-size:10.5px;letter-spacing:0.7px;position:relative;top:-0.5px">(<u>O</u>)</span></div>
<div style="position:absolute;left:1141.2px;top:670.49px;width:77.43px;height:17.75px;background:linear-gradient(#fafafd,#e6e6f0 50%,#cfcfdc);border:1px solid #8a8a9c;border-radius:5px;box-sizing:border-box;"></div>
<div class="t" style="left:1161.04px;top:673.37px;">取消<span style="font-size:10.5px;letter-spacing:0.7px;position:relative;top:-0.5px">(<u>C</u>)</span></div>
</div>
<div id="wmroot">
<div class="wm" style="left:29.2px;top:16.4px;"><span class="wc">电话：</span><span class="wl">4006-6500-27</span></div>
<div class="wm" style="left:29.2px;top:46.2px;"><span class="wc">网址：</span><span class="wu">www.tdxsoft.com</span></div>
<div class="wm" style="left:300.6px;top:16.4px;"><span class="wc">电话：</span><span class="wl">4006-6500-27</span></div>
<div class="wm" style="left:300.6px;top:46.2px;"><span class="wc">网址：</span><span class="wu">www.tdxsoft.com</span></div>
<div class="wm" style="left:572.0px;top:16.4px;"><span class="wc">电话：</span><span class="wl">4006-6500-27</span></div>
<div class="wm" style="left:572.0px;top:46.2px;"><span class="wc">网址：</span><span class="wu">www.tdxsoft.com</span></div>
<div class="wm" style="left:843.4px;top:16.4px;"><span class="wc">电话：</span><span class="wl">4006-6500-27</span></div>
<div class="wm" style="left:843.4px;top:46.2px;"><span class="wc">网址：</span><span class="wu">www.tdxsoft.com</span></div>
<div class="wm" style="left:1114.8px;top:16.4px;"><span class="wc">电话：</span><span class="wl">4006-6500-27</span></div>
<div class="wm" style="left:1114.8px;top:46.2px;"><span class="wc">网址：</span><span class="wu">www.tdxsoft.com</span></div>
<div class="wm" style="left:29.2px;top:126.4px;"><span class="wc">电话：</span><span class="wl">4006-6500-27</span></div>
<div class="wm" style="left:29.2px;top:156.2px;"><span class="wc">网址：</span><span class="wu">www.tdxsoft.com</span></div>
<div class="wm" style="left:300.6px;top:126.4px;"><span class="wc">电话：</span><span class="wl">4006-6500-27</span></div>
<div class="wm" style="left:300.6px;top:156.2px;"><span class="wc">网址：</span><span class="wu">www.tdxsoft.com</span></div>
<div class="wm" style="left:572.0px;top:126.4px;"><span class="wc">电话：</span><span class="wl">4006-6500-27</span></div>
<div class="wm" style="left:572.0px;top:156.2px;"><span class="wc">网址：</span><span class="wu">www.tdxsoft.com</span></div>
<div class="wm" style="left:843.4px;top:126.4px;"><span class="wc">电话：</span><span class="wl">4006-6500-27</span></div>
<div class="wm" style="left:843.4px;top:156.2px;"><span class="wc">网址：</span><span class="wu">www.tdxsoft.com</span></div>
<div class="wm" style="left:1114.8px;top:126.4px;"><span class="wc">电话：</span><span class="wl">4006-6500-27</span></div>
<div class="wm" style="left:1114.8px;top:156.2px;"><span class="wc">网址：</span><span class="wu">www.tdxsoft.com</span></div>
<div class="wm" style="left:29.2px;top:236.4px;"><span class="wc">电话：</span><span class="wl">4006-6500-27</span></div>
<div class="wm" style="left:29.2px;top:266.2px;"><span class="wc">网址：</span><span class="wu">www.tdxsoft.com</span></div>
<div class="wm" style="left:300.6px;top:236.4px;"><span class="wc">电话：</span><span class="wl">4006-6500-27</span></div>
<div class="wm" style="left:300.6px;top:266.2px;"><span class="wc">网址：</span><span class="wu">www.tdxsoft.com</span></div>
<div class="wm" style="left:572.0px;top:236.4px;"><span class="wc">电话：</span><span class="wl">4006-6500-27</span></div>
<div class="wm" style="left:572.0px;top:266.2px;"><span class="wc">网址：</span><span class="wu">www.tdxsoft.com</span></div>
<div class="wm" style="left:843.4px;top:236.4px;"><span class="wc">电话：</span><span class="wl">4006-6500-27</span></div>
<div class="wm" style="left:843.4px;top:266.2px;"><span class="wc">网址：</span><span class="wu">www.tdxsoft.com</span></div>
<div class="wm" style="left:1114.8px;top:236.4px;"><span class="wc">电话：</span><span class="wl">4006-6500-27</span></div>
<div class="wm" style="left:1114.8px;top:266.2px;"><span class="wc">网址：</span><span class="wu">www.tdxsoft.com</span></div>
<div class="wm" style="left:29.2px;top:346.4px;"><span class="wc">电话：</span><span class="wl">4006-6500-27</span></div>
<div class="wm" style="left:29.2px;top:376.2px;"><span class="wc">网址：</span><span class="wu">www.tdxsoft.com</span></div>
<div class="wm" style="left:300.6px;top:346.4px;"><span class="wc">电话：</span><span class="wl">4006-6500-27</span></div>
<div class="wm" style="left:300.6px;top:376.2px;"><span class="wc">网址：</span><span class="wu">www.tdxsoft.com</span></div>
<div class="wm" style="left:572.0px;top:346.4px;"><span class="wc">电话：</span><span class="wl">4006-6500-27</span></div>
<div class="wm" style="left:572.0px;top:376.2px;"><span class="wc">网址：</span><span class="wu">www.tdxsoft.com</span></div>
<div class="wm" style="left:843.4px;top:346.4px;"><span class="wc">电话：</span><span class="wl">4006-6500-27</span></div>
<div class="wm" style="left:843.4px;top:376.2px;"><span class="wc">网址：</span><span class="wu">www.tdxsoft.com</span></div>
<div class="wm" style="left:1114.8px;top:346.4px;"><span class="wc">电话：</span><span class="wl">4006-6500-27</span></div>
<div class="wm" style="left:1114.8px;top:376.2px;"><span class="wc">网址：</span><span class="wu">www.tdxsoft.com</span></div>
<div class="wm" style="left:29.2px;top:456.4px;"><span class="wc">电话：</span><span class="wl">4006-6500-27</span></div>
<div class="wm" style="left:29.2px;top:486.2px;"><span class="wc">网址：</span><span class="wu">www.tdxsoft.com</span></div>
<div class="wm" style="left:300.6px;top:456.4px;"><span class="wc">电话：</span><span class="wl">4006-6500-27</span></div>
<div class="wm" style="left:300.6px;top:486.2px;"><span class="wc">网址：</span><span class="wu">www.tdxsoft.com</span></div>
<div class="wm" style="left:572.0px;top:456.4px;"><span class="wc">电话：</span><span class="wl">4006-6500-27</span></div>
<div class="wm" style="left:572.0px;top:486.2px;"><span class="wc">网址：</span><span class="wu">www.tdxsoft.com</span></div>
<div class="wm" style="left:843.4px;top:456.4px;"><span class="wc">电话：</span><span class="wl">4006-6500-27</span></div>
<div class="wm" style="left:843.4px;top:486.2px;"><span class="wc">网址：</span><span class="wu">www.tdxsoft.com</span></div>
<div class="wm" style="left:1114.8px;top:456.4px;"><span class="wc">电话：</span><span class="wl">4006-6500-27</span></div>
<div class="wm" style="left:1114.8px;top:486.2px;"><span class="wc">网址：</span><span class="wu">www.tdxsoft.com</span></div>
<div class="wm" style="left:29.2px;top:566.4px;"><span class="wc">电话：</span><span class="wl">4006-6500-27</span></div>
<div class="wm" style="left:29.2px;top:596.2px;"><span class="wc">网址：</span><span class="wu">www.tdxsoft.com</span></div>
<div class="wm" style="left:300.6px;top:566.4px;"><span class="wc">电话：</span><span class="wl">4006-6500-27</span></div>
<div class="wm" style="left:300.6px;top:596.2px;"><span class="wc">网址：</span><span class="wu">www.tdxsoft.com</span></div>
<div class="wm" style="left:572.0px;top:566.4px;"><span class="wc">电话：</span><span class="wl">4006-6500-27</span></div>
<div class="wm" style="left:572.0px;top:596.2px;"><span class="wc">网址：</span><span class="wu">www.tdxsoft.com</span></div>
<div class="wm" style="left:843.4px;top:566.4px;"><span class="wc">电话：</span><span class="wl">4006-6500-27</span></div>
<div class="wm" style="left:843.4px;top:596.2px;"><span class="wc">网址：</span><span class="wu">www.tdxsoft.com</span></div>
<div class="wm" style="left:1114.8px;top:566.4px;"><span class="wc">电话：</span><span class="wl">4006-6500-27</span></div>
<div class="wm" style="left:1114.8px;top:596.2px;"><span class="wc">网址：</span><span class="wu">www.tdxsoft.com</span></div>
</div>
</body>
</html>
